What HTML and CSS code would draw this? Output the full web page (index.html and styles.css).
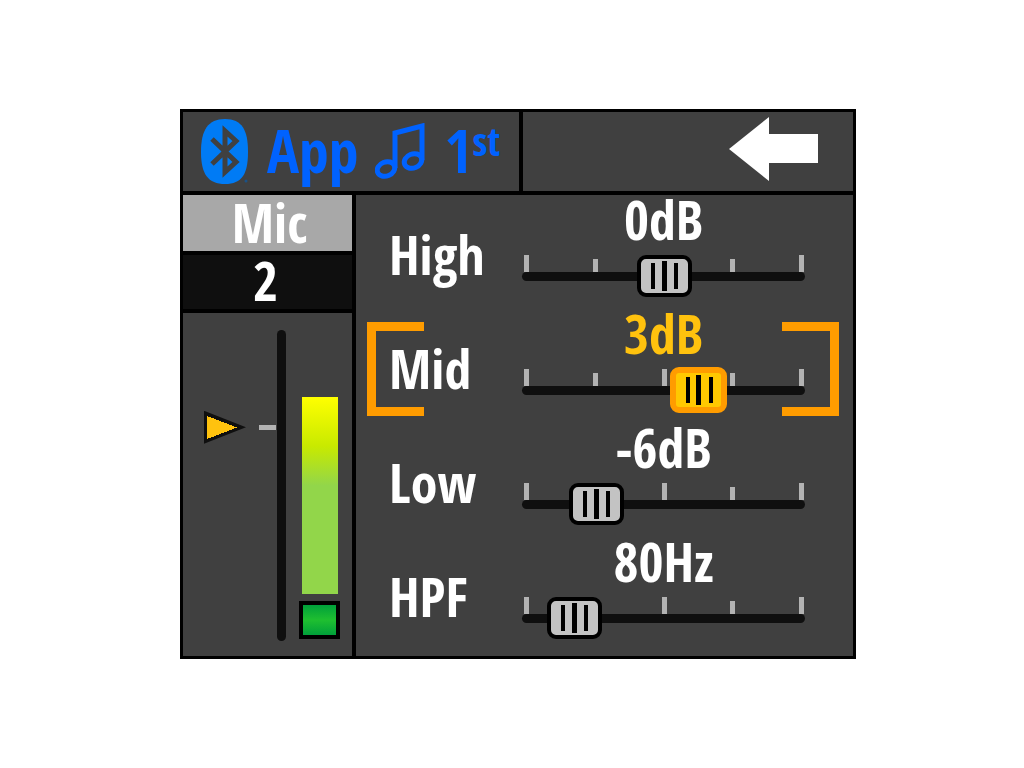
FILE: index.html
```html
<!DOCTYPE html>
<html lang="en">
<head>
  <meta charset="UTF-8" />
  <title>Mic 2 EQ</title>
  <meta name="viewport" content="width=device-width, initial-scale=1.0" />
  <link rel="stylesheet" href="styles.css">
</head>
<body>

  <main class="screen">
    <header class="top-bar">
      <div class="source">
        <svg class="bluetooth" width="48" height="66" viewBox="0 0 48 66" aria-hidden="true">
          <path d="M24 0C41 0 47 11 47 33S41 65 24 65S0 55 0 33S7 0 24 0Z" fill="#007bf5" />
          <path d="M11 20L35 43L24 53V12L35 22L11 45" fill="none" stroke="#404040" stroke-width="5" stroke-miterlimit="8" />
          <circle cx="45" cy="62" r="1.5" fill="#1b5286" />
        </svg>
        <span class="app">App</span>
        <svg class="notes" width="52" height="58" viewBox="0 0 52 58" aria-hidden="true">
          <g fill="none" stroke="#0062ff" stroke-width="5">
            <path d="M20 45V10L47 3V37" />
            <ellipse cx="11" cy="46" rx="9" ry="7" transform="rotate(-22 11 46)" />
            <ellipse cx="38" cy="38" rx="9" ry="7" transform="rotate(-22 38 38)" />
          </g>
        </svg>
        <span class="order">1<span class="suffix">st</span></span>
      </div>
      <button type="button" class="back" aria-label="Back">
        <svg width="90" height="64" viewBox="0 0 90 64" aria-hidden="true">
          <path d="M0 32L40 0V17H89V46H40V64Z" fill="#fff" />
        </svg>
      </button>
    </header>

    <section class="channel">
      <div class="channel-type">Mic</div>
      <div class="channel-number">2</div>
      <div class="meter">
        <input type="range" class="fader" min="0" max="100" value="71" aria-label="Mic 2 level" />
        <div class="scale">
          <span class="unity"></span>
          <span class="rail"></span>
        </div>
        <div class="levels">
          <div class="level"></div>
          <div class="signal"></div>
        </div>
      </div>
    </section>

    <section class="bands">
      <div class="band">
        <label for="high">High</label>
        <output for="high">0dB</output>
        <div class="slider">
          <div class="ticks"><i></i><i></i><i></i><i></i><i></i></div>
          <input type="range" id="high" min="-12" max="12" value="0" />
        </div>
      </div>
      <div class="band selected">
        <label for="mid">Mid</label>
        <output for="mid">3dB</output>
        <div class="slider">
          <div class="ticks"><i></i><i></i><i></i><i></i><i></i></div>
          <input type="range" id="mid" min="-12" max="12" value="3" />
        </div>
      </div>
      <div class="band">
        <label for="low">Low</label>
        <output for="low">-6dB</output>
        <div class="slider">
          <div class="ticks"><i></i><i></i><i></i><i></i><i></i></div>
          <input type="range" id="low" min="-12" max="12" value="-6" />
        </div>
      </div>
      <div class="band">
        <label for="hpf">HPF</label>
        <output for="hpf">80Hz</output>
        <div class="slider">
          <div class="ticks"><i></i><i></i><i></i><i></i><i></i></div>
          <input type="range" id="hpf" min="0" max="470" value="80" />
        </div>
      </div>
    </section>
  </main>

</body>
</html>
```
FILE: styles.css
```css
*,
*::before,
*::after {
  box-sizing: border-box;
}

body {
  margin: 0;
  padding-left: 12px;
  min-height: 100vh;
  display: flex;
  align-items: center;
  justify-content: center;
  background: #fff;
  color: #fff;
  font-family: "Open Sans Condensed", "Open Sans", sans-serif;
  font-size: 54px;
  font-weight: bold;
  line-height: 48px;
}

svg {
  display: block;
  flex: none;
}

.screen {
  width: 100%;
  max-width: 676px;
  display: grid;
  grid-template-columns: 169px 1fr;
  gap: 4px;
  padding: 3px;
  background: #000;
}

/* Top bar */
.top-bar {
  grid-column: 1 / -1;
  display: grid;
  grid-template-columns: 336px 1fr;
  gap: 4px;
  height: 79px;
}

.source,
.back,
.meter,
.bands {
  background: #404040;
}

.source {
  display: flex;
  align-items: center;
  padding-left: 18px;
  color: #0062ff;
  font-size: 60px;
}

.app {
  margin: 0 16px 4px 18px;
}

.order {
  margin: 0 0 4px 18px;
}

.suffix {
  font-size: 40px;
  line-height: 0;
  vertical-align: 17px;
}

.back {
  display: flex;
  align-items: center;
  justify-content: flex-end;
  padding: 0 34px 6px 0;
  border: none;
  cursor: pointer;
}

/* Channel strip */
.channel {
  display: flex;
  flex-direction: column;
  gap: 4px;
  text-align: center;
}

.channel-type {
  background: #a8a8a8;
  padding: 3px 0 5px 4px;
}

.channel-number {
  background: #0f0f0f;
  padding: 1px 4px 5px 0;
}

.meter {
  flex: 1;
  display: flex;
  gap: 13px;
  padding: 17px 12px 15px 21px;
}

.fader {
  -webkit-appearance: none;
  appearance: none;
  writing-mode: vertical-lr;
  direction: rtl;
  width: 42px;
  height: 311px;
  margin: 0;
  background: none;
}

.fader::-webkit-slider-thumb {
  -webkit-appearance: none;
  width: 42px;
  height: 33px;
  border-left: 3px solid #0f0f0f;
  background: conic-gradient(from 249deg at 30px 50%, #ffc20e 42deg, #0f0f0f 0);
  clip-path: polygon(0 0, 100% 50%, 0 100%);
}

.scale {
  display: flex;
  gap: 1px;
}

.unity {
  width: 17px;
  height: 5px;
  margin-top: 95px;
  background: #b3b3b3;
}

.rail {
  width: 9px;
  border-radius: 5px;
  background: #0f0f0f;
}

.levels {
  flex: 1;
  display: flex;
  flex-direction: column;
  align-items: center;
  justify-content: flex-end;
  gap: 7px;
  padding-bottom: 2px;
}

.level {
  width: 36px;
  height: 197px;
  background: linear-gradient(#ffff00, #c8ea00 25%, #92d64a 45%, #92d64a);
}

.signal {
  width: 41px;
  height: 38px;
  border: 4px solid #000;
  background: linear-gradient(#00a03a, #1fbf30, #00a03a);
}

/* EQ bands */
.bands {
  padding-bottom: 5px;
}

.band {
  position: relative;
  display: grid;
  grid-template-columns: 133px 1fr;
  padding: 0 48px 10px 33px;
}

.band label {
  grid-row: 1 / 3;
  padding-top: 35px;
}

.band output {
  text-align: center;
}

.slider {
  display: grid;
  margin-top: 10px;
  height: 46px;
}

.slider::before {
  content: "";
  grid-area: 1 / 1;
  align-self: center;
  height: 9px;
  border-radius: 5px;
  background: #0f0f0f;
}

.ticks {
  grid-area: 1 / 1;
  display: flex;
  justify-content: space-between;
  align-items: flex-end;
  height: 19px;
  padding: 0 1px 0 2px;
}

.ticks i {
  width: 5px;
  height: 17px;
  background: #b3b3b3;
}

.ticks i:nth-child(even) {
  height: 13px;
}

/* The knob is centred on the end ticks, so the input runs past the track */
.slider input {
  -webkit-appearance: none;
  appearance: none;
  grid-area: 1 / 1;
  margin: 0 -24px 0 -22px;
  background: none;
}

.slider input::-webkit-slider-thumb {
  -webkit-appearance: none;
  width: 55px;
  height: 42px;
  border: 4px solid #000;
  border-radius: 9px;
  background:
    linear-gradient(#000, #000) center / 5px 30px no-repeat,
    linear-gradient(#000, #000) 10px center / 4px 26px no-repeat,
    linear-gradient(#000, #000) 33px center / 4px 26px no-repeat,
    #c3c3c3;
}

.selected output {
  color: #ffc20e;
}

.selected .slider input::-webkit-slider-thumb {
  width: 57px;
  height: 46px;
  border: 6px solid #ff9c00;
  background-color: #ffc800;
}

.selected::before,
.selected::after {
  content: "";
  position: absolute;
  top: 13px;
  width: 57px;
  height: 94px;
  border: 9px solid #ff9c00;
}

.selected::before {
  left: 11px;
  border-right: none;
}

.selected::after {
  right: 14px;
  border-left: none;
}

@media (max-width: 600px) {
  .screen {
    grid-template-columns: 1fr;
  }

  .top-bar {
    grid-template-columns: 1fr;
    height: auto;
  }
}
```
